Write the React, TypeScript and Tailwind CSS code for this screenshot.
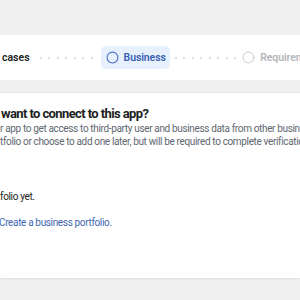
import { Circle } from "lucide-react";

const Dots = ({ count }: { count: number }) => (
  <div className="flex items-center gap-[6.5px]">
    {Array.from({ length: count }).map((_, i) => (
      <span key={i} className="h-[2px] w-[2px] rounded-full bg-[#d3d5d9]" />
    ))}
  </div>
);

const App = () => {
  return (
    <div className="h-[300px] w-[300px] overflow-hidden bg-[#f0f0f0] font-['Roboto',sans-serif]">
      {/* Stepper */}
      <div className="mt-[35px] flex h-[45px] items-center overflow-hidden bg-white pl-[2px]">
        <span className="text-[10.5px] font-semibold text-[#1c1e21]">cases</span>
        <div className="ml-[10px]">
          <Dots count={7} />
        </div>
        <div className="ml-[8px] flex h-[23px] shrink-0 items-center gap-[5px] rounded-[5px] bg-[#e7f0fd] pl-[5px] pr-[4px]">
          <Circle className="h-[13px] w-[13px] text-[#4c6ec5]" strokeWidth={2} />
          <span className="text-[10.5px] font-semibold tracking-[-0.1px] text-[#3a5fb5]">Business</span>
        </div>
        <div className="ml-[5px]">
          <Dots count={8} />
        </div>
        <div className="ml-[6px] flex shrink-0 items-center gap-[5px]">
          <Circle className="h-[13px] w-[13px] text-[#c5c7cb]" strokeWidth={1.8} />
          <span className="whitespace-nowrap text-[10.5px] font-semibold tracking-[-0.1px] text-[#b4b6ba]">Requirements</span>
        </div>
      </div>

      {/* Card */}
      <div className="mt-[12px] h-[186px] border-t border-[#e4e6ea] bg-white shadow-[0_1px_2px_rgba(0,0,0,0.08)]">
        <div className="overflow-hidden pt-[13px]">
          <h2 className="whitespace-nowrap pl-[1px] text-[13px] font-bold leading-[16px] tracking-[-0.6px] text-[#1c1e21]">
            want to connect to this app?
          </h2>
          <div className="whitespace-nowrap text-[10px] leading-[13px] tracking-[-0.35px] text-[#606770]">
            <p>r app to get access to third-party user and business data from other businesses</p>
            <p>tfolio or choose to add one later, but will be required to complete verification.</p>
          </div>
          <p className="mt-[42px] text-[10px] leading-[13px] tracking-[-0.35px] text-[#1c1e21]">folio yet.</p>
          <p className="-ml-[1px] mt-[13px] text-[10px] leading-[13px] tracking-[-0.35px] text-[#4267b2]">
            Create a business portfolio.
          </p>
        </div>
      </div>
    </div>
  );
};

export default App;
